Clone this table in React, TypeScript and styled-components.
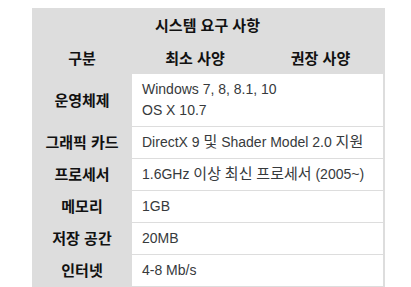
import * as React from 'react'
import styled, { createGlobalStyle } from 'styled-components'

type Spec = {
  label: string
  lines: string[]
}

const specs: Spec[] = [
  { label: '운영체제', lines: ['Windows 7, 8, 8.1, 10', 'OS X 10.7'] },
  { label: '그래픽 카드', lines: ['DirectX 9 및 Shader Model 2.0 지원'] },
  { label: '프로세서', lines: ['1.6GHz 이상 최신 프로세서 (2005~)'] },
  { label: '메모리', lines: ['1GB'] },
  { label: '저장 공간', lines: ['20MB'] },
  { label: '인터넷', lines: ['4-8 Mb/s'] },
]

const GlobalStyle = createGlobalStyle`
  body {
    margin: 0;
    background: #fff;
    font-family: "Liberation Sans", Arial, "Noto Sans CJK KR", sans-serif;
  }
`

const Page = styled.div`
  padding: 8px 26px 0 32px;
`

const Sheet = styled.div`
  display: grid;
  grid-template-columns: 100px 126px 125px;
  width: 351px;
  padding-right: 2px;
  background: #dddddd;
`

const Title = styled.div`
  grid-column: 1 / 4;
  height: 33px;
  display: flex;
  align-items: center;
  justify-content: center;
  font-size: 15px;
  font-weight: bold;
  color: #111;
`

const HeadCell = styled.div`
  height: 33px;
  display: flex;
  align-items: center;
  justify-content: center;
  font-size: 15px;
  font-weight: bold;
  color: #111;
`

const Label = styled.div`
  display: flex;
  align-items: center;
  justify-content: center;
  font-size: 15px;
  line-height: 21px;
  font-weight: bold;
  color: #111;
  border-bottom: 1px solid #dddddd;
`

const Value = styled.div`
  grid-column: 2 / 4;
  background: #fff;
  padding: 5px 10px;
  font-size: 14px;
  line-height: 21px;
  color: #373a3c;
  border-bottom: 1px solid #dddddd;
`

const Line = styled.div`
  height: 21px;
  white-space: nowrap;
`

// hangul runs render a touch larger so they match the wider reference glyphs
const Hangul = styled.span`
  font-size: 15px;
  line-height: 1;
`

const renderLine = (line: string) =>
  line.split(/([\uac00-\ud7a3]+)/).map((part, i) =>
    /[\uac00-\ud7a3]/.test(part) ? <Hangul key={i}>{part}</Hangul> : part
  )

const App = () => (
  <>
    <GlobalStyle />
    <Page>
      <Sheet>
        <Title>시스템 요구 사항</Title>
        <HeadCell>구분</HeadCell>
        <HeadCell>최소 사양</HeadCell>
        <HeadCell>권장 사양</HeadCell>
        {specs.map((spec) => (
          <React.Fragment key={spec.label}>
            <Label>{spec.label}</Label>
            <Value>
              {spec.lines.map((line) => (
                <Line key={line}>{renderLine(line)}</Line>
              ))}
            </Value>
          </React.Fragment>
        ))}
      </Sheet>
    </Page>
  </>
)

export default App
